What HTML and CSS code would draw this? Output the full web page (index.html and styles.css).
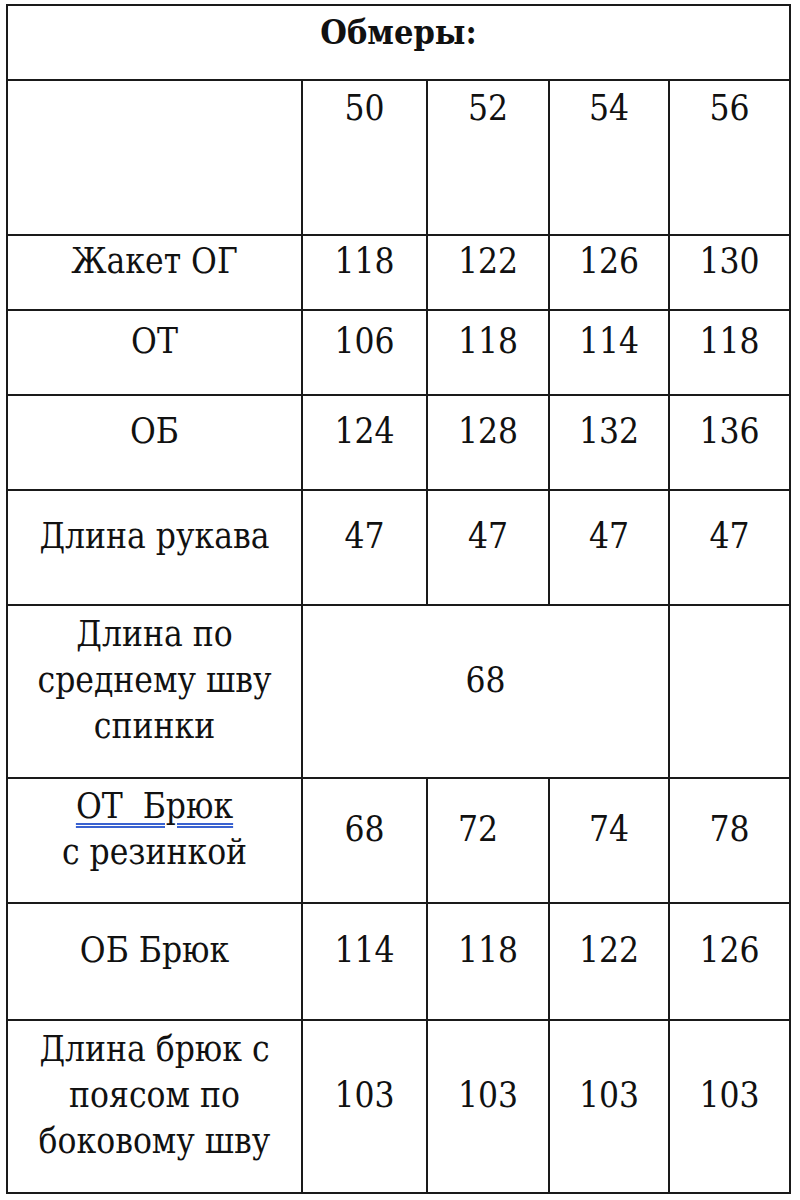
FILE: index.html
```html
<!DOCTYPE html>
<html lang="ru">
<head>
<meta charset="utf-8">
<link rel="stylesheet" href="styles.css">
</head>
<body>
<div class="page">
<table class="sizes">
  <colgroup>
    <col class="c-label"><col class="c1"><col class="c2"><col class="c3"><col class="c4">
  </colgroup>
  <tr class="r-title"><th colspan="5">Обмеры:</th></tr>
  <tr class="r-head"><td></td><td>50</td><td>52</td><td>54</td><td>56</td></tr>
  <tr class="r-a"><td>Жакет ОГ</td><td>118</td><td>122</td><td>126</td><td>130</td></tr>
  <tr class="r-b"><td>ОТ</td><td>106</td><td>118</td><td>114</td><td>118</td></tr>
  <tr class="r-c"><td>ОБ</td><td>124</td><td>128</td><td>132</td><td>136</td></tr>
  <tr class="r-d"><td>Длина рукава</td><td>47</td><td>47</td><td>47</td><td>47</td></tr>
  <tr class="r-e"><td>Длина по<br>среднему шву<br>спинки</td><td colspan="3">68</td><td></td></tr>
  <tr class="r-f"><td><span class="mark">ОТ&nbsp; Брюк</span><br>с резинкой</td><td>68</td><td class="left">72</td><td>74</td><td>78</td></tr>
  <tr class="r-g"><td>ОБ Брюк</td><td>114</td><td>118</td><td>122</td><td>126</td></tr>
  <tr class="r-h"><td>Длина брюк с<br>поясом по<br>боковому шву</td><td>103</td><td>103</td><td>103</td><td>103</td></tr>
</table>
</div>
</body>
</html>
```

FILE: styles.css
```css
html, body {
  margin: 0;
  padding: 0;
  background: #ffffff;
}
.page {
  padding: 4px 0 0 6px;
}
.sizes {
  border-collapse: collapse;
  table-layout: fixed;
  width: 785px;
  font-family: "DejaVu Serif", "Liberation Serif", serif;
  font-stretch: condensed;
  font-size: 35px;
  line-height: 46px;
  color: #111;
}
.c-label { width: 295px; }
.c1 { width: 125px; }
.c2 { width: 122px; }
.c3 { width: 120px; }
.c4 { width: 121px; }
.sizes th, .sizes td {
  border: 2px solid #1a1a1a;
  text-align: center;
  vertical-align: middle;
  padding: 0 0 24px 0;
}
.sizes th {
  font-weight: bold;
  font-size: 34px;
  vertical-align: top;
  padding: 3px 0 0 0;
}
.r-title { height: 75px; }
.r-head { height: 155px; }
.r-head td { vertical-align: top; padding: 4px 0 0 0; }
.r-a { height: 75px; }
.r-b { height: 85px; }
.r-c { height: 95px; }
.r-d { height: 115px; }
.r-e { height: 173px; }
.r-f { height: 125px; }
.r-g { height: 117px; }
.r-h { height: 173px; }
.sizes td.left { text-align: left; padding-left: 30px; }
.mark {
  text-decoration-line: underline;
  text-decoration-style: double;
  text-decoration-color: #3a62d0;
  text-decoration-thickness: 2px;
  text-underline-offset: 5px;
}
```
